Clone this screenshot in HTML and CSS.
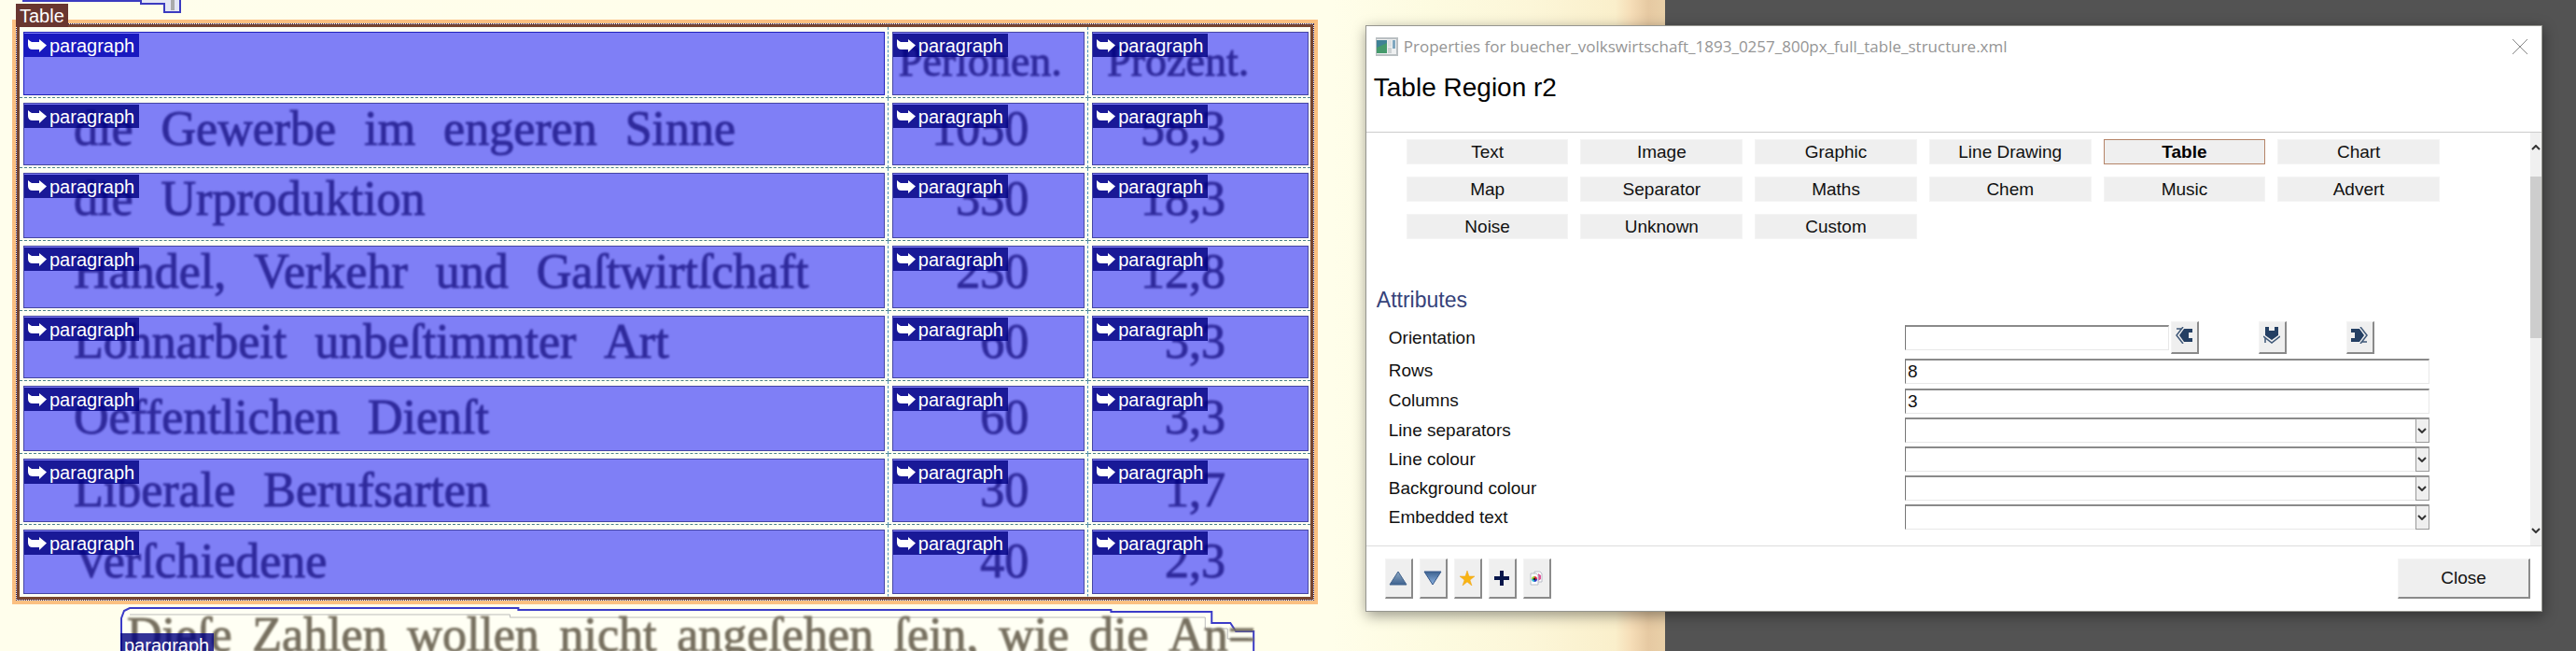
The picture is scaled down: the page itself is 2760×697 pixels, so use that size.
FILE: index.html
```
<!DOCTYPE html>
<html lang="en">
<head>
<meta charset="utf-8">
<title>Table Region properties</title>
<link rel="stylesheet" href="styles.css">
</head>
<body>
<svg class="defs" aria-hidden="true">
  <symbol id="reply" viewBox="0 0 20 14"><path d="M0 0q2 2 4 3h8V0l8 6.500-8 7.500V11H5Q0 11 0 6z" fill="#fff"/></symbol>
  <symbol id="turn" viewBox="0 0 18 18"><path d="M18 2H9L4 9l5 7h9v-4h-4V6h4z" fill="#243f63"/><path d="M8 0L1 9l7 9" fill="none" stroke="#eee" stroke-width="3"/><path d="M8 0L1 9l7 9M1 2h5" fill="none" stroke="#3f5878" stroke-width="1.500"/></symbol>
  <symbol id="chev" viewBox="0 0 10 6"><path d="M1 1l4 4 4-4" fill="none" stroke="#333" stroke-width="2"/></symbol>
</svg>
<main class="scan" lang="de">
  <div class="previous">
    <svg viewBox="0 0 200 21" aria-hidden="true"><path d="M24-2V1H151V4H176V13H193V-2z" fill="#e4e6f4"/><path d="M185 0v11" stroke="#aaa" stroke-width="4"/><path d="M24 1H151V4H176V13H193V-2" fill="none" stroke="#3b3bc0" stroke-width="2"/></svg>
  </div>
  <section class="region">
    <span class="tag tag-table">Table</span>
    <div class="marching">
    <table class="cells">
      <colgroup><col class="c1"><col class="c2"><col class="c3"></colgroup>
      <tr class="mid">
        <th><div class="cell active"><span class="tag"><svg><use href="#reply"/></svg>paragraph</span></div></th>
        <th><div class="cell head"><span class="tag"><svg><use href="#reply"/></svg>paragraph</span><p class="ink">Perſonen.</p></div></th>
        <th><div class="cell head wide"><span class="tag"><svg><use href="#reply"/></svg>paragraph</span><p class="ink">Prozent.</p></div></th>
      </tr>
      <tr>
        <td><div class="cell"><span class="tag"><svg><use href="#reply"/></svg>paragraph</span><p class="ink"><span>die</span> <span>Gewerbe</span> <span>im</span> <span>engeren</span> <span>Sinne</span></p></div></td>
        <td><div class="cell num"><span class="tag"><svg><use href="#reply"/></svg>paragraph</span><p class="ink">1050</p></div></td>
        <td><div class="cell num pct"><span class="tag"><svg><use href="#reply"/></svg>paragraph</span><p class="ink">58,3</p></div></td>
      </tr>
      <tr class="tall">
        <td><div class="cell"><span class="tag"><svg><use href="#reply"/></svg>paragraph</span><p class="ink"><span>die</span> <span>Urproduktion</span></p></div></td>
        <td><div class="cell num"><span class="tag"><svg><use href="#reply"/></svg>paragraph</span><p class="ink">330</p></div></td>
        <td><div class="cell num pct"><span class="tag"><svg><use href="#reply"/></svg>paragraph</span><p class="ink">18,3</p></div></td>
      </tr>
      <tr>
        <td><div class="cell"><span class="tag"><svg><use href="#reply"/></svg>paragraph</span><p class="ink"><span>Handel,</span> <span>Verkehr</span> <span>und</span> <span>Gaſtwirtſchaft</span></p></div></td>
        <td><div class="cell num"><span class="tag"><svg><use href="#reply"/></svg>paragraph</span><p class="ink">230</p></div></td>
        <td><div class="cell num pct"><span class="tag"><svg><use href="#reply"/></svg>paragraph</span><p class="ink">12,8</p></div></td>
      </tr>
      <tr>
        <td><div class="cell"><span class="tag"><svg><use href="#reply"/></svg>paragraph</span><p class="ink"><span>Lohnarbeit</span> <span>unbeſtimmter</span> <span>Art</span></p></div></td>
        <td><div class="cell num"><span class="tag"><svg><use href="#reply"/></svg>paragraph</span><p class="ink">60</p></div></td>
        <td><div class="cell num pct"><span class="tag"><svg><use href="#reply"/></svg>paragraph</span><p class="ink">3,3</p></div></td>
      </tr>
      <tr class="tall low">
        <td><div class="cell"><span class="tag"><svg><use href="#reply"/></svg>paragraph</span><p class="ink"><span>Oeffentlichen</span> <span>Dienſt</span></p></div></td>
        <td><div class="cell num"><span class="tag"><svg><use href="#reply"/></svg>paragraph</span><p class="ink">60</p></div></td>
        <td><div class="cell num pct"><span class="tag"><svg><use href="#reply"/></svg>paragraph</span><p class="ink">3,3</p></div></td>
      </tr>
      <tr class="mid low">
        <td><div class="cell"><span class="tag"><svg><use href="#reply"/></svg>paragraph</span><p class="ink"><span>Liberale</span> <span>Berufsarten</span></p></div></td>
        <td><div class="cell num"><span class="tag"><svg><use href="#reply"/></svg>paragraph</span><p class="ink">30</p></div></td>
        <td><div class="cell num pct"><span class="tag"><svg><use href="#reply"/></svg>paragraph</span><p class="ink">1,7</p></div></td>
      </tr>
      <tr class="tall low last">
        <td><div class="cell"><span class="tag"><svg><use href="#reply"/></svg>paragraph</span><p class="ink"><span>Verſchiedene</span></p></div></td>
        <td><div class="cell num"><span class="tag"><svg><use href="#reply"/></svg>paragraph</span><p class="ink">40</p></div></td>
        <td><div class="cell num pct"><span class="tag"><svg><use href="#reply"/></svg>paragraph</span><p class="ink">2,3</p></div></td>
      </tr>
    </table>
    </div>
  </section>
  <section class="next">
    <svg class="outline" viewBox="0 0 1218 60" preserveAspectRatio="none" aria-hidden="true"><path d="M1 60V12L4 4 10 1H427V3H1063V5H1171V17H1191L1197 26H1216V60" fill="#fffff4" stroke="#3b3bc8" stroke-width="2"/><path d="M10 8H418V11H1164V23H1188V34H1210" fill="none" stroke="#bbb" stroke-width="1"/></svg>
    <span class="tag tag-plain">paragraph</span>
    <p class="ink"><span>Dieſe</span> <span>Zahlen</span> <span>wollen</span> <span>nicht</span> <span>angeſehen</span> <span>ſein,</span> <span>wie</span> <span>die</span> <span>An=</span></p>
  </section>
</main>

<div class="dialog" role="dialog" aria-label="Properties">
  <header class="titlebar">
    <svg class="app" viewBox="0 0 24 20" aria-hidden="true"><rect x="0" y="0" width="24" height="20" fill="#b9bfc2"/><rect x="1" y="2" width="21" height="16" fill="#eef0f1"/><rect x="1" y="3" width="11" height="14" fill="#3f8296"/><path d="M1 17V11L12 6v11z" fill="#459a6c"/><rect x="13" y="3" width="4" height="7" fill="#dde1e3"/><rect x="18" y="3" width="3" height="9" fill="#7fa7bf"/><rect x="13" y="11" width="4" height="6" fill="#cfd3d5"/></svg>
    <span class="title">Properties for buecher_volkswirtschaft_1893_0257_800px_full_table_structure.xml</span>
    <button class="x" aria-label="Close window"><svg viewBox="0 0 16 16"><path d="M0 0L16 16M16 0L0 16" stroke="#888" fill="none"/></svg></button>
  </header>
  <h1>Table Region r2</h1>
  <div class="body">
    <div class="content">
      <div class="types">
        <button>Text</button><button>Image</button><button>Graphic</button><button>Line Drawing</button><button class="selected">Table</button><button>Chart</button>
        <button>Map</button><button>Separator</button><button>Maths</button><button>Chem</button><button>Music</button><button>Advert</button>
        <button>Noise</button><button>Unknown</button><button>Custom</button>
      </div>
      <h2>Attributes</h2>
      <form class="form">
        <label for="ori">Orientation</label>
        <div class="orient"><input id="ori" type="text">
          <div class="turns">
          <button type="button" class="raised" aria-label="Rotate left"><svg><use href="#turn"/></svg></button>
          <button type="button" class="raised" aria-label="Rotate down"><svg class="down"><use href="#turn"/></svg></button>
          <button type="button" class="raised" aria-label="Rotate right"><svg class="right"><use href="#turn"/></svg></button>
          </div>
        </div>
        <label for="rows">Rows</label><input id="rows" type="text" value="8">
        <label for="cols">Columns</label><input id="cols" type="text" value="3">
        <label for="sep">Line separators</label><div class="drop"><select id="sep"><option></option></select><i><svg><use href="#chev"/></svg></i></div>
        <label for="lc">Line colour</label><div class="drop"><select id="lc"><option></option></select><i><svg><use href="#chev"/></svg></i></div>
        <label for="bc">Background colour</label><div class="drop"><select id="bc"><option></option></select><i><svg><use href="#chev"/></svg></i></div>
        <label for="et">Embedded text</label><div class="drop"><select id="et"><option></option></select><i><svg><use href="#chev"/></svg></i></div>
      </form>
    </div>
    <div class="scrollbar" aria-hidden="true"><svg class="up"><use href="#chev"/></svg><span class="thumb"></span><svg><use href="#chev"/></svg></div>
  </div>
  <footer class="footer">
    <button class="raised tool" aria-label="Up"><svg viewBox="0 0 20 16"><defs><linearGradient id="g1" x1="0" y1="0" x2="0" y2="1"><stop offset="0" stop-color="#8fa9c4"/><stop offset="1" stop-color="#3d628f"/></linearGradient></defs><path d="M10 1L19 15H1z" fill="url(#g1)" stroke="#41628c" stroke-linejoin="round"/></svg></button>
    <button class="raised tool" aria-label="Down"><svg viewBox="0 0 20 16"><defs><linearGradient id="g2" x1="0" y1="0" x2="0" y2="1"><stop offset="0" stop-color="#3d628f"/><stop offset="1" stop-color="#8db4e4"/></linearGradient></defs><path d="M10 15L19 1H1z" fill="url(#g2)" stroke="#36588a" stroke-linejoin="round"/></svg></button>
    <button class="raised tool" aria-label="Favourite"><svg viewBox="0 0 20 16"><path d="M10 0l2 6h6l-5 4 2 6-5-4-5 4 2-6-5-4h6z" fill="#f8b412" stroke="#efa31a" stroke-width=".5"/></svg></button>
    <button class="raised tool" aria-label="Add"><svg viewBox="0 0 20 16"><path d="M10 0v16M2 8h16" stroke="#07154a" stroke-width="4"/></svg></button>
    <button class="raised tool" aria-label="Colours"><svg viewBox="0 0 20 16"><path d="M8 1h6l2 2v9H8z" fill="#fff" stroke="#b8bcc6"/><path d="M12 3l3 2v4l-3 2z" fill="#e0569a"/><path d="M4 3h6l2 2v10H4z" fill="#fff" stroke="#b8bcc6"/><path d="M8 9V6a3 3 0 0 1 3 3z" fill="#e8283c"/><path d="M8 9h3a3 3 0 0 1-3 3z" fill="#2b36c9"/><path d="M8 9v3a3 3 0 0 1-3-3z" fill="#2bb8d8"/><path d="M8 9H5a3 3 0 0 1 3-3z" fill="#9adb3a"/><circle cx="8" cy="9" r="1.3" fill="#222"/></svg></button>
    <button class="raised close">Close</button>
  </footer>
</div>
</body>
</html>
```

FILE: styles.css
```
* { box-sizing: border-box; }
body {
  margin: 0;
  height: 100vh;
  overflow: hidden;
  position: relative;
  background: #535353;
  color: #111;
  font-family: "Liberation Sans", Arial, sans-serif;
  font-size: 19px;
}
button, input, select { font: inherit; color: inherit; }
button { padding: 0; }
p { margin: 0; }
.defs { position: absolute; width: 0; height: 0; }

/* scanned page */
.scan {
  width: 64.64%;
  height: 100%;
  overflow: hidden;
  background: linear-gradient(to right, #fffeec 0, #fffeea 80%, #fdfbe0 86%, #fcf6d8 92%, #faefcb 97%, #f5dcb6 98%, #e6c9a2 99%, #e9d0a8 100%);
}
.previous { height: 21px; }
.previous svg { display: block; width: 200px; height: 21px; }
.region {
  position: relative;
  margin: 0 20.85% 0 13px;
  border: 4px solid #fbc081;
}
.marching { border: 1px dotted #2a2060; background: #fff; }
.cells {
  width: 100%;
  border: 3px solid #78452f;
  border-spacing: 0;
  table-layout: fixed;
  background: #fdfff4;
}
.c1 { width: 67.3%; }
.c2 { width: 15.5%; }
.c3 { width: 17.2%; }
.cells td, .cells th {
  padding: 5px 3px 2px 4px;
  border-right: 1px dashed #4a90b8;
  border-bottom: 1px dashed #4a8088;
  font-weight: normal;
  text-align: left;
}
.cells th:last-child, .cells td:last-child { border-right: 0; padding-right: 2px; }
.cells .last td { border-bottom-color: transparent; }
.cell {
  position: relative;
  height: 67px;
  padding: 1px 0 0 53px;
  border: 1px solid #4646a4;
  background: #7f7ff6;
}
.active { border-color: #2222bb; }
.mid .cell { height: 68px; }
.tall .cell { height: 70px; }
.last .cell { height: 69px; }
.low .cell { padding-top: 7px; }
.mid .head { padding: 5px 0 0 6px; }
.mid .wide { padding-left: 15px; }
.cell.num { padding-left: 0; padding-right: 59px; }
.cell.num .ink { justify-content: flex-end; }
.cell.pct { padding-right: 88px; }
.ink {
  display: flex;
  gap: 30px;
  white-space: nowrap;
  font-family: "Liberation Serif", serif;
  font-size: 52px;
  line-height: 52px;
  color: #2f2a9c;
  -webkit-text-stroke: 1px currentColor;
  filter: blur(1px);
}
.head .ink { font-size: 46px; }
.tag {
  position: absolute;
  z-index: 1;
  top: 1px;
  left: 0;
  display: flex;
  align-items: center;
  gap: 3px;
  height: 25px;
  padding: 0 5px 0 4px;
  background: rgba(0, 0, 128, .8);
  color: #fff;
  font-size: 20px;
  line-height: 24px;
}
.tag svg { width: 20px; height: 14px; }
.active .tag { background: rgba(0, 0, 178, .8); }
.tag-table { top: -21px; left: 0; padding: 0 4px; background: #693630; }
.next {
  position: relative;
  height: 60px;
  margin: 3px 24.6% 0 129px;
  padding: 4px 0 0 7px;
}
.next .ink { position: relative; color: #77705f; justify-content: space-between; gap: 0; }
.outline { position: absolute; inset: 0; width: 100%; height: 60px; }
.tag-plain { top: 28px; }

/* properties dialog */
.dialog {
  position: absolute;
  top: 27px;
  left: 53%;
  right: 36px;
  background: #fff;
  border: 1px solid rgba(80, 80, 70, .6);
  box-shadow: 1px 4px 14px rgba(0, 0, 0, .4);
}
.titlebar { display: flex; align-items: center; height: 43px; padding: 0 15px 0 10px; }
.app { width: 24px; height: 20px; }
.title { flex: 1; margin-left: 6px; font-family: "Open Sans", sans-serif; font-size: 17px; color: #959595; }
.x { border: 0; background: none; width: 16px; height: 16px; }
.x svg { display: block; width: 16px; height: 16px; }
h1 { margin: 0; height: 71px; padding: 7px 0 0 8px; font-size: 28px; line-height: 32px; font-weight: normal; color: #000; border-bottom: 1px solid #ccc; }
.body { display: flex; }
.content { flex: 1; padding: 7px 0 17px; }
.types {
  display: grid;
  grid-template-columns: repeat(6, 1fr);
  gap: 13px;
  padding: 0 97px 0 43px;
}
.types button { height: 27px; border: 1px solid #f4f4f4; background: #efefef; line-height: 25px; }
.types .selected { border: 1px solid #b58468; font-weight: bold; color: #000; }
h2 { margin: 51px 0 9px 11px; font-size: 23px; line-height: 28px; font-weight: normal; color: #36437a; }
.form {
  display: grid;
  grid-template-columns: 553fr 562fr;
  grid-template-rows: 35px 28px 28px repeat(4, 27px);
  row-gap: 4px;
  align-items: center;
  margin: 0 108px 0 24px;
}
.form input, .form select {
  width: 100%;
  height: 27px;
  min-width: 0;
  padding: 0 2px;
  border: 1px solid #e8e8e8;
  border-top: 2px solid #8a8a8a;
  border-left-color: #777;
  border-radius: 0;
  background: #fff;
  appearance: none;
}
.orient { display: flex; align-items: center; }
.form .orient input { flex: 1; }
.turns { flex: 1; display: flex; gap: 64px; padding-left: 2px; }
.raised {
  border: 1px solid #f4f4f4;
  border-right: 2px solid #8a8a8a;
  border-bottom: 2px solid #8a8a8a;
  background: #efefef;
}
.turns .raised { width: 30px; height: 35px; padding-bottom: 4px; }
.turns svg { display: block; width: 18px; height: 18px; margin: 0 auto; }
.turns .down { transform: rotate(-90deg); }
.turns .right { transform: rotate(180deg); }
.drop { display: grid; grid-template-columns: 1fr 15px; }
.drop select { grid-area: 1 / 1 / 2 / 3; }
.drop i {
  grid-area: 1 / 2;
  display: grid;
  place-items: center;
  margin-top: 1px;
  border: 1px solid #999;
  background: #efefef;
  pointer-events: none;
}
.drop svg { width: 10px; height: 6px; }
.scrollbar { width: 12px; display: flex; flex-direction: column; align-items: center; justify-content: space-between; background: #f0f0f0; padding: 13px 0; }
.scrollbar svg { width: 10px; height: 6px; }
.scrollbar .up { transform: rotate(180deg); }
.thumb { width: 100%; height: 173px; margin: 28px 0 auto; background: #cdcdcd; }
.footer { display: flex; gap: 7px; padding: 13px 12px 13px 20px; border-top: 1px solid #ddd; }
.footer .raised { height: 43px; }
.tool { width: 30px; }
.tool svg { display: block; width: 20px; height: 16px; margin: 0 auto; }
.footer .close { width: 142px; margin-left: auto; }
```
